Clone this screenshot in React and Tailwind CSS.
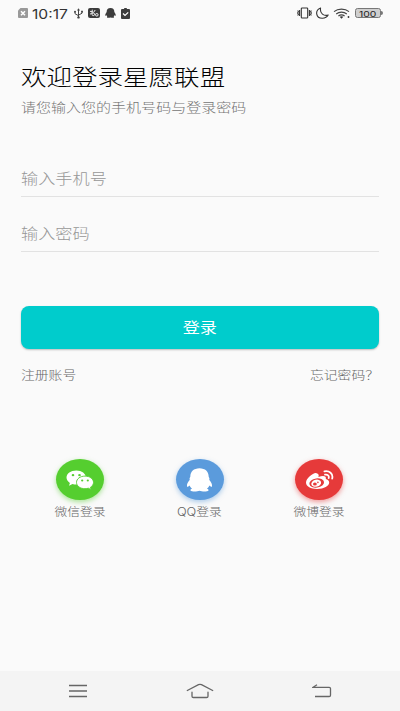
import { useState } from "react";

function StatusBar() {
  return (
    <div className="flex h-[26px] items-center justify-between pl-[18px] pr-[17px] text-[#444]">
      <div className="flex items-center">
        <svg className="h-[10px] w-[10px]" viewBox="0 0 10 10">
          <path d="M2.5 0H9a1 1 0 0 1 1 1v8a1 1 0 0 1-1 1H1a1 1 0 0 1-1-1V2.5z" fill="#999" />
          <path d="M3 3.2l4 4M7 3.2l-4 4" stroke="#fff" strokeWidth="1.5" />
        </svg>
        <span className="ml-[4px] w-[36px] origin-left scale-x-[1.2] pt-px text-[13px] leading-[14px] font-normal text-[#333]">
          10:17
        </span>
        <svg className="ml-[6px] h-[11px] w-[9px]" viewBox="0 0 9 11" fill="none" stroke="currentColor">
          <path d="M4.5 1v8M1 4v1.7l3.5 2M8 3.5v1.7l-3.5 2" />
          <path d="M3 2.5L4.5.3 6 2.5z" fill="currentColor" stroke="none" />
          <circle cx="4.5" cy="9.4" r="1.2" fill="currentColor" stroke="none" />
          <circle cx="1" cy="3.8" r="1" fill="currentColor" stroke="none" />
          <path d="M7.1 2.8h1.8v1.8H7.1z" fill="currentColor" stroke="none" />
        </svg>
        <svg className="ml-[5px] h-[10px] w-[12px]" viewBox="0 0 12 10">
          <rect width="12" height="10" rx="2" fill="#3c3c3c" />
          <g fill="none" stroke="#fff" strokeWidth="0.9">
            <path d="M2 3.3l3 .7M4.3 1.7L4 4.5M2 6.2l2.5-1.5M5.5 4.5L7.2 2" />
            <circle cx="5.3" cy="6.3" r="1.3" />
            <circle cx="8.8" cy="6.8" r="1.3" />
          </g>
        </svg>
        <svg className="ml-[5px] h-[10px] w-[11px]" viewBox="0 0 10 10" preserveAspectRatio="none" fill="#3c3c3c">
          <path d="M5 0C2.6 0 1.5 1.6 1.5 4 .8 5.2.1 6.400.2 7.600c.2.5.8.1 1.300-.3.1.5.3.8.6 1.100-.6.5-.3 1.400.7 1.400.8 0 1.600-.1 2.200-.4.6.3 1.400.4 2.200.4 1 0 1.300-.9.700-1.400.3-.3.500-.6.600-1.100.5.400 1.100.8 1.300.3.1-1.200-.6-2.400-1.300-3.600C8.500 1.600 7.400 0 5 0z" />
        </svg>
        <svg className="ml-[5px] h-[11px] w-[9px]" viewBox="0 0 9 11">
          <path d="M1 1h2a1.5 1.2 0 0 1 3 0h2a1 1 0 0 1 1 1v8a1 1 0 0 1-1 1H1a1 1 0 0 1-1-1V2a1 1 0 0 1 1-1z" fill="#3c3c3c" />
          <path d="M2 5.5l2 2 3.2-3.2" fill="none" stroke="#fff" strokeWidth="1.2" />
        </svg>
      </div>
      <div className="flex items-center">
        <svg className="h-[12px] w-[15px]" viewBox="0 0 15 12" fill="none" stroke="#333" strokeWidth="1.1">
          <rect x="4.3" y="1" width="6.4" height="10" rx="0.8" />
          <path d="M2.6 3v6M12.4 3v6M.7 3.5l.7 1.2-.8 1.3.8 1.3-.7 1.2M14.3 3.5l-.7 1.2.8 1.3-.8 1.3.7 1.2" />
        </svg>
        <svg className="ml-[4px] h-[12px] w-[13px]" viewBox="0 0 13 12" fill="none" stroke="#333" strokeWidth="1.1">
          <path d="M4.6 1C1.8 2 .4 4.2.7 6.8c.4 2.7 2.6 4.4 5.6 4.4 2.6 0 4.8-1.1 5.9-3.1C8 9.3 3.5 6.5 4.6 1z" strokeLinejoin="round" />
        </svg>
        <svg className="ml-[4px] h-[11px] w-[18px]" viewBox="0 0 18 11" fill="none" stroke="#444" strokeWidth="1.1">
          <path d="M1 3.7C5 .2 12 .2 16 3.7M3.2 6c3-2.5 7.6-2.5 10.6 0M5.4 8c2-1.5 4.2-1.5 6.2 0" />
          <path d="M6.7 8.8L8.5 10.8l1.8-2c-1-.8-2.6-.8-3.6 0z" fill="#333" stroke="none" />
          <circle cx="15.5" cy="9" r="0.9" fill="#333" stroke="none" />
        </svg>
        <div className="ml-[4px] flex items-center">
          <div className="flex h-[10px] w-[26px] items-center justify-center rounded-[2.5px] border border-[#777] bg-[#cfcfcf] pt-px">
            <span className="scale-x-[1.3] text-[8px] leading-[8px] font-normal text-[#222]">100</span>
          </div>
          <div className="h-[4px] w-[2px] rounded-r-sm bg-[#777]" />
        </div>
      </div>
    </div>
  );
}

function WechatIcon() {
  return (
    <svg className="h-[20px] w-[28px]" viewBox="0 0 28 20">
      <path
        d="M10.3.4C4.800.4.5 3.5.5 7.500c0 2.200 1.300 4.100 3.400 5.400L3 15.700l3.500-1.800c1.200.4 2.500.6 3.800.6 5.500 0 9.600-3.100 9.600-7S15.800.4 10.300.4z"
        fill="#fff"
      />
      <path
        d="M19 6.100c-4.900 0-8.500 2.800-8.500 6.300s3.600 6.300 8.500 6.300c1.200 0 2.300-.2 3.300-.5l2.900 1.500-.8-2.400c1.900-1.200 3.100-2.900 3.100-4.900 0-3.500-3.700-6.300-8.500-6.300z"
        fill="#fff"
        stroke="#55ce2f"
        strokeWidth="0.9"
      />
      <g fill="#55ce2f">
        <ellipse cx="7" cy="5.2" rx="1.3" ry="1.1" />
        <ellipse cx="13.5" cy="5.2" rx="1.3" ry="1.1" />
        <ellipse cx="16.2" cy="10.5" rx="1.1" ry="0.9" />
        <ellipse cx="21.8" cy="10.5" rx="1.1" ry="0.9" />
      </g>
    </svg>
  );
}

function QQIcon() {
  return (
    <svg className="h-[24px] w-[27px]" viewBox="0 0 28 25" preserveAspectRatio="none" fill="#fff">
      <path d="M14 .3C8 .3 4.500 4 4.500 8.800c0 .8-.8 1.300-.8 2.200 0 .7.300 1 .1 1.400C2 14.200.8 16.500 1 19c.1 1.300 1.300.4 2.800-.8.5 1.400 1.300 2.300 2.500 3.300-1.300.4-2.100 1.100-1.600 1.900 1 1.500 7 1.300 9.300.2 2.300 1.100 8.300 1.300 9.300-.2.500-.8-.3-1.500-1.600-1.900 1.200-1 2-1.900 2.500-3.300 1.500 1.200 2.700 2.100 2.800.8.200-2.500-1-4.800-2.800-6.600-.2-.4.100-.7.100-1.400 0-.9-.8-1.400-.8-2.200C23.500 4 20 .3 14 .3z" />
    </svg>
  );
}

function WeiboIcon() {
  return (
    <svg className="h-[20px] w-[29px]" viewBox="0 0 29 20">
      <path
        d="M11.5 3.2C9.5 1.7 1 7.8 1 12.6c0 4 5 6.400 11 6.400 7 0 12.200-3.200 12.200-6.500 0-2-1.600-3-3.400-3.500.9-2.800-2.300-3.800-7.400-1.900.8-2 .1-3.500-1.900-3.900z"
        fill="#fff"
      />
      <ellipse cx="11.7" cy="13" rx="7.4" ry="4.6" transform="rotate(-8 11.7 13)" fill="#e63a3a" />
      <ellipse cx="11.2" cy="13.2" rx="5" ry="3.5" transform="rotate(-15 11.2 13.2)" fill="#fff" />
      <ellipse cx="9.9" cy="14" rx="1.9" ry="1.5" fill="#e63a3a" />
      <circle cx="12.9" cy="12.4" r="0.8" fill="#e63a3a" />
      <path d="M19.4 1.3c4.800-.9 9 2.200 7.800 7.300M20 4.700c2.600-.5 4.300 1 3.700 3.400" fill="none" stroke="#fff" strokeWidth="1.8" strokeLinecap="round" />
    </svg>
  );
}

const socials = [
  {
    label: "微信登录",
    icon: <WechatIcon />,
    color: "bg-[#55ce2f] shadow-[0_2px_5px_rgba(85,206,47,0.5)]",
  },
  {
    label: "QQ登录",
    icon: <QQIcon />,
    color: "bg-[#5b9bdc] shadow-[0_2px_5px_rgba(91,155,220,0.5)]",
  },
  {
    label: "微博登录",
    icon: <WeiboIcon />,
    color: "bg-[#e63a3a] shadow-[0_2px_5px_rgba(230,58,58,0.5)]",
  },
];

export default function App() {
  const [phone, setPhone] = useState("");
  const [password, setPassword] = useState("");

  return (
    <div className="flex h-[711px] w-[400px] flex-col overflow-hidden bg-[#fafafa] font-['Inter','Noto_Sans_CJK_SC',sans-serif] font-light">
      <StatusBar />

      <main className="flex-1 px-[21px] pt-[36px]">
        <h1 className="w-[176px] origin-left scale-x-[1.16] text-[22px] leading-[30px] font-light whitespace-nowrap text-black">
          欢迎登录星愿联盟
        </h1>
        <p className="mt-[5px] w-[195px] origin-left scale-x-[1.155] text-[13px] leading-[20px] whitespace-nowrap text-[#757575]">
          请您输入您的手机号码与登录密码
        </p>

        <div className="mt-[43px] border-b border-[#e2e2e2]">
          <input
            type="tel"
            value={phone}
            onChange={(e) => setPhone(e.target.value)}
            placeholder="输入手机号"
            className="block h-[36px] w-[300px] origin-left scale-x-[1.16] pt-[2px] text-[14.8px] outline-none placeholder:text-[#979797]"
          />
        </div>
        <div className="mt-[18px] border-b border-[#e2e2e2]">
          <input
            type="password"
            value={password}
            onChange={(e) => setPassword(e.target.value)}
            placeholder="输入密码"
            className="block h-[36px] w-[300px] origin-left scale-x-[1.16] pt-[2px] text-[14.8px] outline-none placeholder:text-[#979797]"
          />
        </div>

        <button className="mt-[54px] flex h-[43px] w-[358px] items-center justify-center rounded-[8px] bg-[#00cccc] pt-[2px] text-[14.8px] font-normal text-white shadow-[0_1px_2px_rgba(0,0,0,0.25)]">
          <span className="scale-x-[1.16]">登录</span>
        </button>

        <div className="mt-[17px] flex justify-between text-[12px] leading-[20px] text-[#666]">
          <a className="origin-left scale-x-[1.15]">注册账号</a>
          <a className="origin-right scale-x-[1.15]">忘记密码？</a>
        </div>

        <div className="mt-[73px] flex justify-between pr-[29px] pl-[28px]">
          {socials.map((s) => (
            <div key={s.label} className="flex w-[62px] flex-col items-center">
              <div className={`flex h-[41px] w-[48px] items-center justify-center rounded-[50%] ${s.color}`}>
                {s.icon}
              </div>
              <span className="mt-[4px] scale-x-[1.16] text-[11px] leading-[16px] whitespace-nowrap text-[#666]">
                {s.label}
              </span>
            </div>
          ))}
        </div>
      </main>

      <nav className="flex h-[40px] items-center justify-between bg-[#f4f4f4] px-[68px]">
        <svg className="h-[14px] w-[20px]" viewBox="0 0 20 14" stroke="#666" strokeWidth="1.3">
          <path d="M1 1.5h18M1 7h18M1 12.5h18" />
        </svg>
        <svg className="h-[16px] w-[28px]" viewBox="0 0 28 16" fill="none" stroke="#666" strokeWidth="1.3">
          <path d="M1.3 7.5L12.5 1.7q1.5-.6 3 0L26.7 7.5M6 9.2v4q0 1.3 1.4 1.3h13.2q1.4 0 1.4-1.3v-4" strokeLinecap="round" />
        </svg>
        <svg className="h-[14px] w-[20px]" viewBox="0 0 20 14" fill="none" stroke="#666" strokeWidth="1.3">
          <path d="M5 .8L1 3.3h16.2q1.3 0 1.3 1.2v6.7q0 1.3-1.3 1.3H3" />
        </svg>
      </nav>
    </div>
  );
}
